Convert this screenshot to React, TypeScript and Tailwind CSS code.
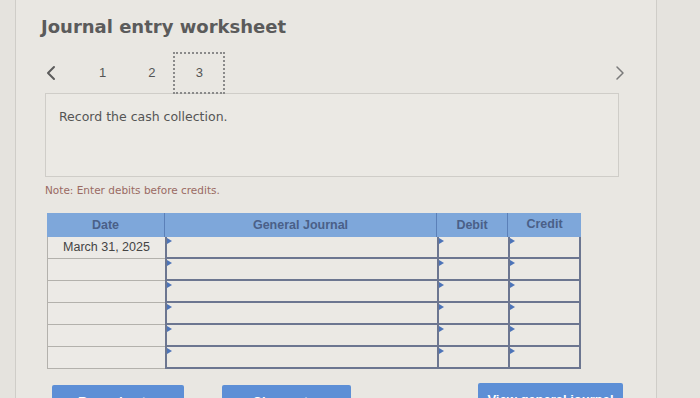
import React from "react";

const rows = ["March 31, 2025", "", "", "", "", ""];

const Marker: React.FC = () => (
  <span className="absolute left-0 top-[1px] w-0 h-0 border-y-[3px] border-y-transparent border-l-[5px] border-l-[#4d74b8]" />
);

const ChevronLeft: React.FC = () => (
  <svg width="10" height="16" viewBox="0 0 10 16" fill="none">
    <path d="M8 2L2 8l6 6" stroke="#5c5c5c" strokeWidth="2" strokeLinecap="round" strokeLinejoin="round" />
  </svg>
);

const ChevronRight: React.FC = () => (
  <svg width="10" height="16" viewBox="0 0 10 16" fill="none">
    <path d="M2 2l6 6-6 6" stroke="#7a7a7a" strokeWidth="1.5" strokeLinecap="round" strokeLinejoin="round" />
  </svg>
);

const App: React.FC = () => {
  return (
    <div className="w-[700px] h-[398px] overflow-hidden bg-[#e5e3de] font-['Liberation_Sans',Arial,sans-serif]">
      <div className="ml-[15px] w-[642px] h-full bg-[#e9e7e2] border-x border-[#cfcdc8]">
        {/* Title */}
        <h1 className="pt-[15px] pl-[25px] text-[18px] leading-[24px] font-bold text-[#5b5b5b] font-['DejaVu_Sans',Verdana,sans-serif]">
          Journal entry worksheet
        </h1>

        {/* Tabs */}
        <div className="mt-[13px] h-[42px] flex items-center text-[13px] text-[#555]">
          <div className="ml-[30px] w-[10px] flex justify-center">
            <ChevronLeft />
          </div>
          <span className="ml-[43px]">1</span>
          <span className="ml-[42px]">2</span>
          <div className="ml-[18px] w-[52px] h-[42px] flex items-center justify-center border-2 border-dotted border-[#8a8a8a]">
            3
          </div>
          <div className="ml-auto mr-[31px]">
            <ChevronRight />
          </div>
        </div>

        {/* Instruction */}
        <div className="-mt-[1px] ml-[29px] w-[574px] h-[84px] border border-[#cfcdc8] bg-[#ebe9e4] pl-[13px] pt-[15px]">
          <p className="text-[12.5px] leading-[16px] text-[#555] font-['DejaVu_Sans',Verdana,sans-serif]">
            Record the cash collection.
          </p>
        </div>

        <p className="mt-[6px] ml-[29px] text-[10.5px] leading-[14px] text-[#9a6a62] font-['DejaVu_Sans',Verdana,sans-serif]">
          Note: Enter debits before credits.
        </p>

        {/* Table */}
        <div className="mt-[16px] ml-[31px] w-[534px] grid grid-cols-[118px_272px_71px_73px]">
          <div className="h-[24px] flex items-center justify-center bg-[#7ea7da] border-r border-[#5b80b8] text-[12.5px] font-bold text-[#4a6088]">Date</div>
          <div className="h-[24px] flex items-center justify-center bg-[#7ea7da] border-r border-[#5b80b8] text-[12.5px] font-bold text-[#4a6088]">General Journal</div>
          <div className="h-[24px] flex items-center justify-center bg-[#7ea7da] border-r border-[#5b80b8] text-[12.5px] font-bold text-[#4a6088]">Debit</div>
          <div className="h-[24px] flex items-center justify-center bg-[#7ea7da] text-[12.5px] font-bold text-[#4a6088] pb-[2px]">Credit</div>
          {rows.map((date, i) => (
            <React.Fragment key={i}>
              <div className="h-[22px] flex items-center justify-center border-l border-b border-[#b3b1ac] bg-[#eceae6] text-[12.5px] text-[#444]">
                {date}
              </div>
              <div className="relative h-[22px] border-l-2 border-b-2 border-[#6c7690] bg-[#ebe9e4]">
                <Marker />
              </div>
              <div className="relative h-[22px] border-l-2 border-b-2 border-[#6c7690] bg-[#ebe9e4]">
                <Marker />
              </div>
              <div className="relative h-[22px] border-x-2 border-b-2 border-[#6c7690] bg-[#ebe9e4]">
                <Marker />
              </div>
            </React.Fragment>
          ))}
        </div>

        {/* Buttons */}
        <div className="mt-[16px] flex items-start text-[13px] leading-[16px] font-bold text-white">
          <div className="ml-[36px] w-[132px] h-[36px] rounded-t-[2px] bg-[#5d8fd6] flex justify-center pt-[9px]">Record entry</div>
          <div className="ml-[38px] w-[129px] h-[36px] rounded-t-[2px] bg-[#5d8fd6] flex justify-center pt-[9px]">Clear entry</div>
          <div className="ml-[127px] -mt-[2px] w-[145px] h-[38px] rounded-t-[2px] bg-[#5d8fd6] flex justify-center pt-[9px]">View general journal</div>
        </div>
      </div>
    </div>
  );
};

export default App;
